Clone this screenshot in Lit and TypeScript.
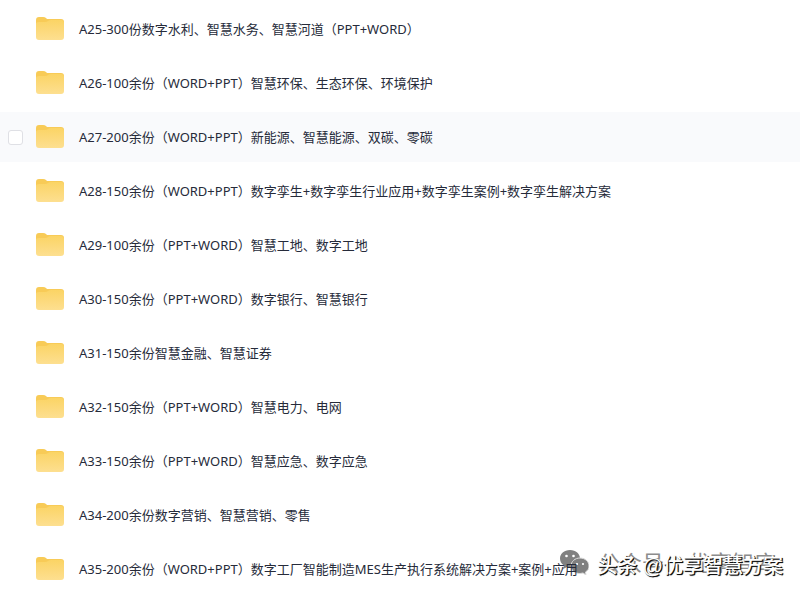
import { LitElement, html, css } from "lit";
import { customElement, property } from "lit/decorators.js";

const folders = [
  "A25-300份数字水利、智慧水务、智慧河道（PPT+WORD）",
  "A26-100余份（WORD+PPT）智慧环保、生态环保、环境保护",
  "A27-200余份（WORD+PPT）新能源、智慧能源、双碳、零碳",
  "A28-150余份（WORD+PPT）数字孪生+数字孪生行业应用+数字孪生案例+数字孪生解决方案",
  "A29-100余份（PPT+WORD）智慧工地、数字工地",
  "A30-150余份（PPT+WORD）数字银行、智慧银行",
  "A31-150余份智慧金融、智慧证券",
  "A32-150余份（PPT+WORD）智慧电力、电网",
  "A33-150余份（PPT+WORD）智慧应急、数字应急",
  "A34-200余份数字营销、智慧营销、零售",
  "A35-200余份（WORD+PPT）数字工厂智能制造MES生产执行系统解决方案+案例+应用",
];

@customElement("folder-row")
class FolderRow extends LitElement {
  @property() name = "";
  @property({ type: Boolean, reflect: true }) active = false;

  static styles = css`
    :host {
      display: flex;
      align-items: center;
      height: 50px;
      padding-left: 8px;
    }
    :host([active]) {
      background: #f9fafc;
    }
    .pick {
      appearance: none;
      flex: none;
      box-sizing: border-box;
      width: 15px;
      height: 15px;
      margin: 0 13px 0 0;
      border: 1px solid #dfe0e5;
      border-radius: 3px;
      background: #fff;
      opacity: 0;
    }
    :host([active]) .pick {
      opacity: 1;
    }
    .folder {
      flex: none;
      width: 28px;
      height: 24px;
      margin-right: 15px;
    }
    .name {
      color: #262b3a;
      text-decoration: none;
      white-space: nowrap;
    }
  `;

  render() {
    return html`
      <input class="pick" type="checkbox" aria-label=${this.name} />
      <svg class="folder" viewBox="0 0 28 24" aria-hidden="true">
        <defs>
          <linearGradient id="front" x1="0" y1="0" x2="0" y2="1">
            <stop offset="0" stop-color="#fbd465" />
            <stop offset="1" stop-color="#fddf90" />
          </linearGradient>
        </defs>
        <path d="M0 9V3Q0 0 3 0H7Q9 0 10 1L11 2H25Q28 2 28 5V9Z" fill="#f8cb57" />
        <path d="M0 7Q0 5 3 5H9Q11 5 12 4Q13 3 15 3H25Q28 3 28 6V20Q28 23 25 23H3Q0 23 0 20Z" fill="url(#front)" />
      </svg>
      <a class="name" href="#">${this.name}</a>
    `;
  }
}

@customElement("app-root")
class AppRoot extends LitElement {
  static styles = css`
    :host {
      display: block;
      position: relative;
      overflow: hidden;
      background: #fff;
      font: 13px/20px "Noto Sans", "Noto Sans CJK SC", sans-serif;
    }
    .list {
      position: relative;
      z-index: 1;
      display: flex;
      flex-direction: column;
      gap: 4px;
      padding: 4px 0 0;
    }
    .account {
      position: absolute;
      right: 24px;
      bottom: 18px;
      display: flex;
      align-items: center;
      gap: 9px;
      color: #8c8c8c;
      font-size: 22px;
      line-height: 28px;
      white-space: nowrap;
    }
    .chat {
      width: 29px;
      height: 25px;
    }
    .byline {
      position: absolute;
      right: 17px;
      bottom: 14px;
      color: #fff;
      font: 20px/28px "Liberation Sans", "Noto Sans CJK SC", sans-serif;
      font-weight: 500;
      white-space: nowrap;
      text-shadow: 1px 1px 0 #111, 1px 1px 1px #111;
    }
  `;

  render() {
    return html`
      <main class="list">
        ${folders.map((name, i) => html`<folder-row .name=${name} ?active=${i === 2}></folder-row>`)}
      </main>
      <div class="account">
        <svg class="chat" viewBox="0 0 29 25" aria-hidden="true">
          <path d="M10 0C4 0 0 4 0 8.500C0 11 1 13.500 4 15.500L3 19L7 17Q9 17.500 11 17.500C16 17 20 13 20 8.500C20 4 16 0 10 0Z" fill="#808080" />
          <path d="M20 8C15 8 11 11.500 11 16C11 20.500 15 23.500 20 23.500L23 23L26 25L25.500 22C28 20.500 29 18.500 29 16C29 11.500 25 8 20 8Z" fill="#808080" stroke="#ddd" stroke-width="1" />
          <g fill="#fff">
            <circle cx="6.500" cy="6" r="1.300" /><circle cx="13.500" cy="6" r="1.300" />
            <circle cx="17" cy="14" r="1.100" /><circle cx="23" cy="14" r="1.100" />
          </g>
        </svg>
        <span>公众号</span><span>·</span><span>优享智库</span>
      </div>
      <div class="byline">头条 @优享智慧方案</div>
    `;
  }
}
